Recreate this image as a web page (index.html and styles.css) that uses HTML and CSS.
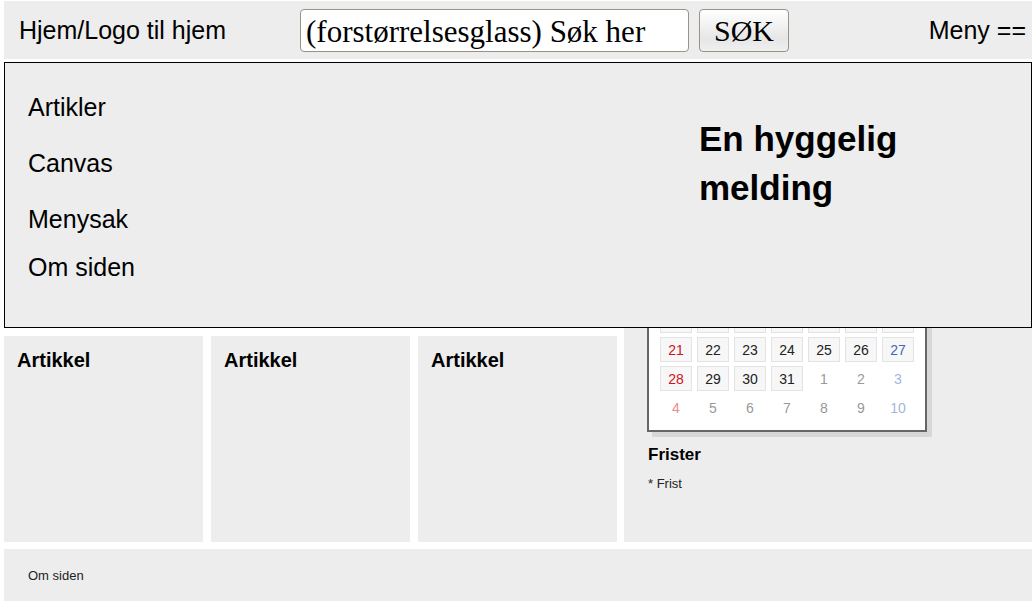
FILE: index.html
```html
<!DOCTYPE html>
<html lang="no">
<head>
<meta charset="utf-8">
<title>Hjem</title>
<link rel="stylesheet" href="styles.css">
</head>
<body>
<header class="topbar">
  <a class="logo" href="#">Hjem/Logo til hjem</a>
  <form class="search">
    <input class="search-field" type="text" aria-label="Søk" value="(forstørrelsesglass) Søk her">
    <button class="search-button" type="button">SØK</button>
  </form>
  <div class="menu-toggle-area"><button class="menu-toggle" type="button">Meny ==</button></div>
</header>
<div class="content">
  <nav class="menu">
    <div class="menu-links">
      <ul class="menu-list">
        <li><a href="#">Artikler</a></li>
        <li><a href="#">Canvas</a></li>
        <li><a href="#">Menysak</a></li>
      </ul>
      <a href="#">Om siden</a>
    </div>
    <h1 class="message">En hyggelig melding</h1>
  </nav>
  <main class="page">
    <section class="articles">
      <article class="card"><h2>Artikkel</h2></article>
      <article class="card"><h2>Artikkel</h2></article>
      <article class="card"><h2>Artikkel</h2></article>
    </section>
    <aside class="sidebar">
      <div class="calendar">
        <table class="days">
          <tr><td></td><td></td><td></td><td></td><td></td><td></td><td></td></tr>
          <tr><td class="sunday">21</td><td>22</td><td>23</td><td>24</td><td>25</td><td>26</td><td class="saturday">27</td></tr>
          <tr><td class="sunday">28</td><td>29</td><td>30</td><td>31</td><td class="next">1</td><td class="next">2</td><td class="next saturday">3</td></tr>
          <tr><td class="next sunday">4</td><td class="next">5</td><td class="next">6</td><td class="next">7</td><td class="next">8</td><td class="next">9</td><td class="next saturday">10</td></tr>
        </table>
      </div>
      <div class="deadlines">
        <h3>Frister</h3>
        <p>* Frist</p>
      </div>
    </aside>
  </main>
</div>
<footer class="footer"><a href="#">Om siden</a></footer>
</body>
</html>
```
FILE: styles.css
```css
* { box-sizing: border-box; }
body {
  margin: 0;
  padding: 1px 4px 2px;
  background: #fff;
  color: #000;
  font-family: "Liberation Sans", Arial, sans-serif;
}
h1, h2, h3, p, ul { margin: 0; padding: 0; }
a { color: inherit; text-decoration: none; }

.topbar {
  display: flex;
  align-items: center;
  min-height: 58px;
  padding: 0 6px 0 15px;
  background: #ededed;
  font-size: 25px;
}
.logo { flex: 281; white-space: nowrap; }
.search { flex: 489; display: flex; gap: 10px; min-width: 0; }
.search-field, .search-button {
  height: 43px;
  border: 1px solid #9c9186;
  border-radius: 4px;
  color: #000;
  font-family: "Liberation Serif", "Times New Roman", serif;
}
.search-field {
  flex: 1;
  min-width: 0;
  padding: 3px 5px 0;
  background: #fff;
  font-size: 31px;
}
.search-button {
  width: 90px;
  padding: 2px 0 0;
  background: linear-gradient(#fff, #e6e6e6 70%, #f0f0f0);
  font-size: 30px;
}
.menu-toggle-area { flex: 237; text-align: right; }
.menu-toggle {
  padding: 0;
  border: 0;
  background: none;
  color: inherit;
  font: inherit;
}

.content { position: relative; margin-top: 3px; }
.menu {
  position: absolute;
  top: 0;
  left: 0;
  right: 0;
  z-index: 1;
  display: grid;
  grid-template-columns: 671fr 308fr;
  padding: 20px 24px 36px 23px;
  border: 1px solid #000;
  background: #ededed;
}
.menu-links { font-size: 25px; line-height: 48px; }
.menu-list { display: grid; gap: 8px; list-style: none; }
.message { padding-top: 31px; font-size: 35px; line-height: 49px; }

.page {
  display: grid;
  grid-template-columns: 613fr 408fr;
  gap: 7px;
}
.articles {
  display: grid;
  grid-template-columns: repeat(3, 1fr);
  gap: 8px;
  padding-top: 274px;
}
.card { min-height: 206px; padding: 12px 13px; background: #ededed; }
.card h2 { font-size: 20px; line-height: 24px; }

.sidebar { padding: 232px 24px 24px 23px; background: #ededed; }
.calendar {
  width: 280px;
  padding: 8px 6px 6px;
  border: 2px solid #666;
  background: #fff;
  box-shadow: 5px 5px 0 #d7d7d7;
}
.days {
  width: 100%;
  table-layout: fixed;
  border-collapse: separate;
  border-spacing: 5px 4px;
  font-size: 14px;
  line-height: 16px;
  text-align: center;
}
.days td {
  height: 25px;
  padding: 0;
  border: 1px solid #e3e3e3;
  background: #f7f7f7;
  color: #222;
}
.days .next { border-color: transparent; background: none; color: #999; }
.days .sunday { color: #d0121b; }
.days .saturday { color: #4566b8; }
.days .next.sunday { color: #e88a8e; }
.days .next.saturday { color: #a3b5de; }

.deadlines { display: grid; gap: 11px; padding: 13px 1px 0; }
.deadlines h3 { font-size: 17px; line-height: 20px; }
.deadlines p { font-size: 13px; line-height: 16px; color: #222; }

.footer {
  min-height: 52px;
  margin-top: 7px;
  padding: 19px 24px 17px;
  background: #ededed;
  color: #222;
  font-size: 13px;
  line-height: 16px;
}
```
